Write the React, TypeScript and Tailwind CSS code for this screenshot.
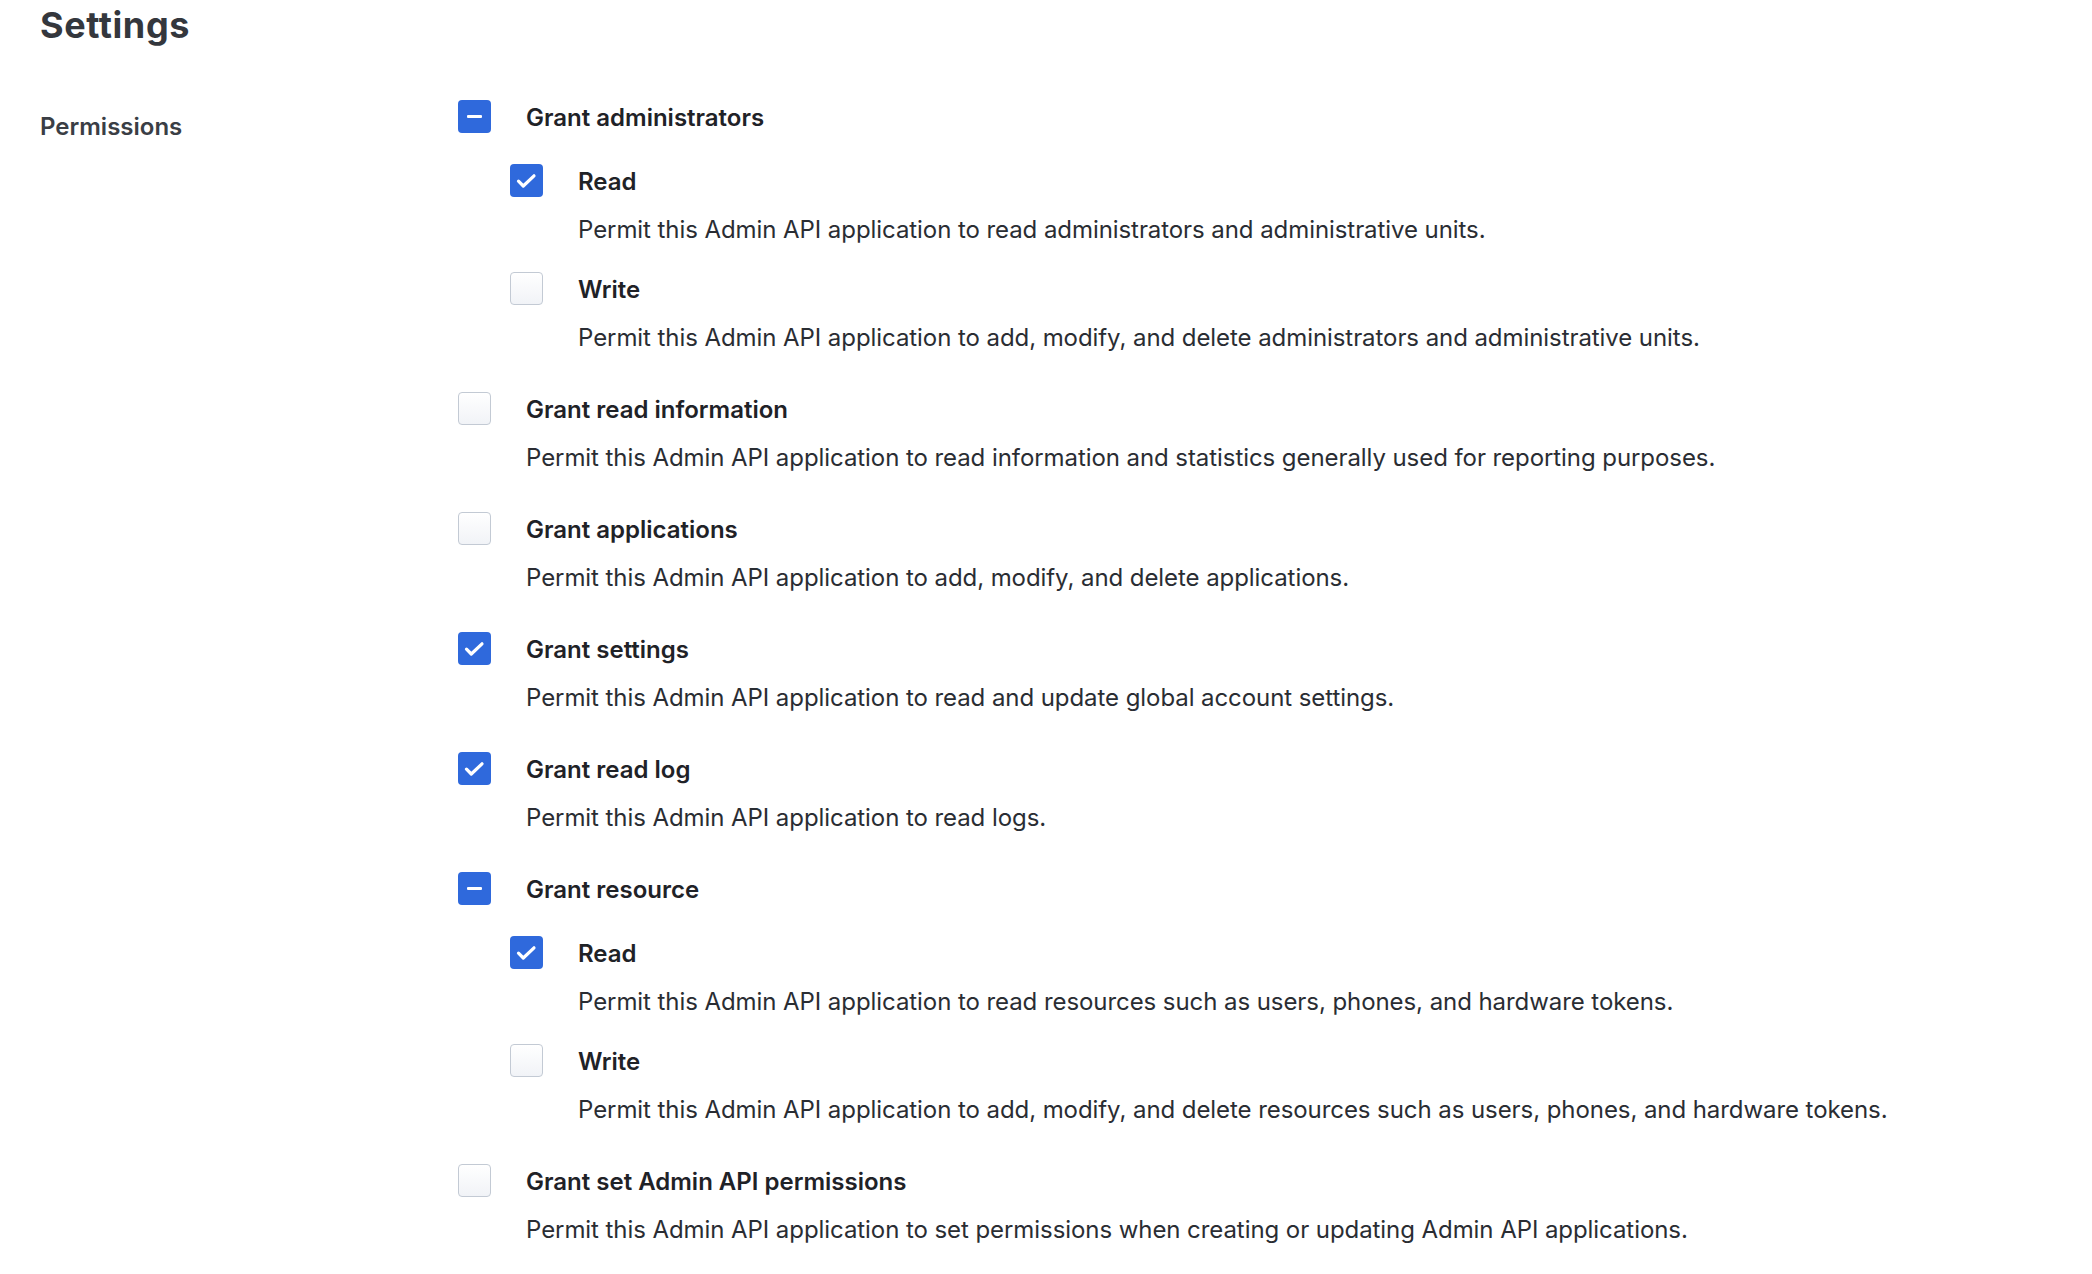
import React from "react";

type State = "checked" | "indeterminate" | "unchecked";

function Box({ state }: { state: State }) {
  if (state === "unchecked") {
    return (
      <div className="w-[33px] h-[33px] shrink-0 rounded-[4px] border-[1.5px] border-[#c3cad4] bg-gradient-to-b from-[#ffffff] to-[#f1f3f7]" />
    );
  }
  return (
    <div className="relative w-[33px] h-[33px] shrink-0 rounded-[4px] bg-[#2f69dc] flex items-center justify-center">
      {state === "checked" ? (
        <svg className="absolute inset-0" width="33" height="33" viewBox="0 0 33 33" fill="none">
          <path d="M8.5 17.2 L13.3 22 L24 11.8" stroke="white" strokeWidth="3.2" strokeLinecap="round" strokeLinejoin="round" />
        </svg>
      ) : (
        <div className="w-[15px] h-[3.5px] rounded-[1px] bg-white" />
      )}
    </div>
  );
}

type Item = { label: string; state: State; desc?: string; children?: Item[] };

const items: Item[] = [
  {
    label: "Grant administrators",
    state: "indeterminate",
    children: [
      { label: "Read", state: "checked", desc: "Permit this Admin API application to read administrators and administrative units." },
      { label: "Write", state: "unchecked", desc: "Permit this Admin API application to add, modify, and delete administrators and administrative units." },
    ],
  },
  { label: "Grant read information", state: "unchecked", desc: "Permit this Admin API application to read information and statistics generally used for reporting purposes." },
  { label: "Grant applications", state: "unchecked", desc: "Permit this Admin API application to add, modify, and delete applications." },
  { label: "Grant settings", state: "checked", desc: "Permit this Admin API application to read and update global account settings." },
  { label: "Grant read log", state: "checked", desc: "Permit this Admin API application to read logs." },
  {
    label: "Grant resource",
    state: "indeterminate",
    children: [
      { label: "Read", state: "checked", desc: "Permit this Admin API application to read resources such as users, phones, and hardware tokens." },
      { label: "Write", state: "unchecked", desc: "Permit this Admin API application to add, modify, and delete resources such as users, phones, and hardware tokens." },
    ],
  },
  { label: "Grant set Admin API permissions", state: "unchecked", desc: "Permit this Admin API application to set permissions when creating or updating Admin API applications." },
];

function Entry({ item }: { item: Item }) {
  return (
    <div className="flex flex-col">
      <div className="flex items-center h-[33px] gap-[35px]">
        <Box state={item.state} />
        <span className="text-[24px] leading-[32px] font-semibold text-[#1f2227] translate-y-[1px]">{item.label}</span>
      </div>
      {item.desc && (
        <p className="mt-[16px] ml-[68px] text-[24px] leading-[32px] tracking-[-0.07px] text-[#2a2d33] translate-y-[1px]">{item.desc}</p>
      )}
      {item.children && (
        <div className="mt-[31px] ml-[52px] flex flex-col gap-[27px]">
          {item.children.map((c, i) => (
            <Entry key={i} item={c} />
          ))}
        </div>
      )}
    </div>
  );
}

export default function App() {
  return (
    <div className="min-h-screen bg-white pl-[40px] pt-[4px]" style={{ fontFamily: "Inter, 'Noto Sans', sans-serif" }}>
      <h1 className="mt-[1px] text-[36px] leading-[40px] font-bold tracking-[0.6px] text-[#34373d]">Settings</h1>
      <div className="mt-[55px] flex">
        <div className="w-[418px] shrink-0 pt-[11px]">
          <span className="text-[24px] leading-[32px] font-semibold text-[#3a3e45]">Permissions</span>
        </div>
        <div className="flex flex-col gap-[39px]">
          {items.map((it, i) => (
            <Entry key={i} item={it} />
          ))}
        </div>
      </div>
    </div>
  );
}
